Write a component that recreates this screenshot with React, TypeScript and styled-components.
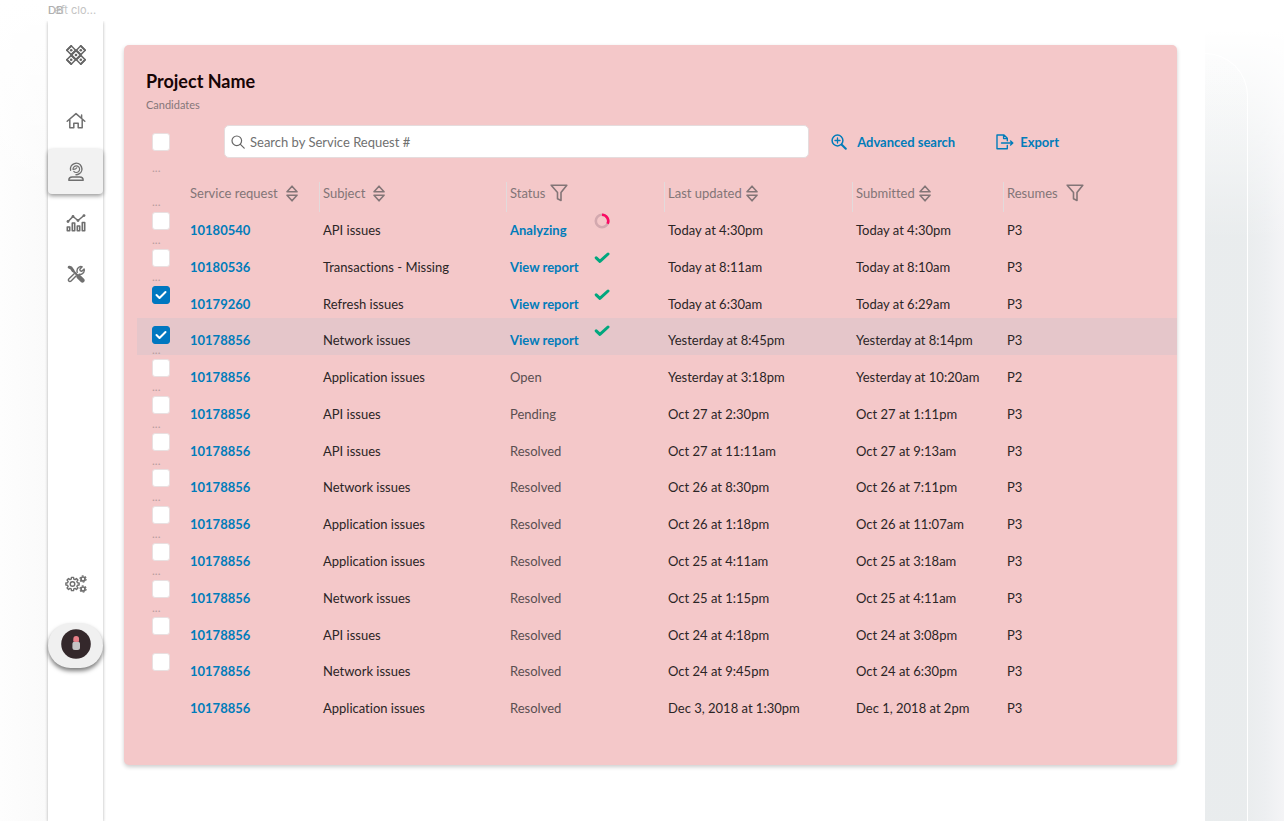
import React, { useState } from "react";
import styled, { createGlobalStyle, css } from "styled-components";

const GlobalStyle = createGlobalStyle`
  *, *::before, *::after { box-sizing: border-box; }
  body {
    margin: 0;
    background: #fff;
    color: #2b2526;
    font-family: Lato, "Liberation Sans", sans-serif;
    font-size: 13px;
    line-height: 20px;
    font-variant-ligatures: none;
  }
`;

const Shell = styled.div`
  display: flex;
  min-height: 100vh;
`;

const Gutter = styled.div`
  flex: 0 0 48px;
  background: linear-gradient(to bottom, #fff, rgba(255, 255, 255, 0) 200px),
    linear-gradient(to right, #fdfdfd, #fafafa);
`;

const Rail = styled.div`
  flex: 0 0 55px;
  display: flex;
  flex-direction: column;
`;

const FrameLabels = styled.div`
  display: grid;
  height: 21px;
  font-family: Inter, "Liberation Sans", sans-serif;
  font-size: 11px;
  white-space: nowrap;
`;

const FrameLabel = styled.span<{ $tone: string }>`
  grid-area: 1 / 1;
  color: ${(p) => p.$tone};
`;

const Nav = styled.nav`
  flex: 1;
  display: flex;
  flex-direction: column;
  gap: 6px;
  padding: 12px 0 153px;
  background: #fff;
  box-shadow: 0 1px 3px rgba(0, 0, 0, 0.3);
  clip-path: inset(0 -6px);
`;

const Brand = styled.div`
  display: grid;
  place-items: center;
  height: 44px;
  margin-bottom: 15px;
  color: #666;
`;

const raised = css`
  background: #f2f2f2;
  box-shadow: 0 2px 4px rgba(0, 0, 0, 0.4);
`;

const NavButton = styled.button<{ $active?: boolean; $bottom?: boolean }>`
  display: grid;
  place-items: center;
  height: 45px;
  padding: 0;
  border: 0;
  border-radius: 4px;
  background: none;
  color: #6f6f6f;
  cursor: pointer;
  ${(p) => p.$active && raised}
  ${(p) => p.$bottom && "margin-top: auto;"}
`;

const AvatarButton = styled.button`
  display: grid;
  justify-items: center;
  align-items: start;
  height: 45px;
  margin-top: 11px;
  padding: 6px 0 0;
  border: 0;
  border-radius: 23px;
  cursor: pointer;
  background: #f0f0f0;
  box-shadow: 0 3px 4px rgba(0, 0, 0, 0.5);
`;

const Main = styled.main`
  flex: 1;
  min-width: 0;
  padding: 45px 28px 56px 21px;
`;

const Card = styled.section`
  padding: 24px 0 42px;
  border-radius: 5px;
  background: #f4c8c9;
  box-shadow: 0 2px 4px rgba(0, 0, 0, 0.2);
`;

const Heading = styled.header`
  padding: 0 22px;
`;

const Title = styled.h1`
  margin: 0;
  font-size: 18px;
  line-height: 24px;
  font-weight: 700;
  color: #170405;
`;

const Subtitle = styled.p`
  margin: 4px 0 0;
  font-size: 11px;
  line-height: 16px;
  color: #857779;
`;

const Toolbar = styled.div`
  display: flex;
  align-items: center;
  padding: 12px 118px 0 28px;
`;

const SearchBox = styled.label`
  flex: 1;
  display: flex;
  align-items: center;
  gap: 5px;
  height: 33px;
  margin: 0 22px 0 54px;
  padding: 0 6px;
  border: 1px solid #e5dcdd;
  border-radius: 5px;
  background: #fff;
  color: #666;
`;

const SearchInput = styled.input`
  flex: 1;
  min-width: 0;
  padding: 0;
  border: 0;
  outline: 0;
  background: none;
  font: inherit;
  color: #333;
  &::placeholder {
    color: #707070;
    opacity: 1;
  }
`;

const ActionButton = styled.button`
  display: flex;
  align-items: center;
  padding: 0;
  border: 0;
  background: none;
  font: inherit;
  font-weight: 700;
  color: #007cba;
  cursor: pointer;
`;

const Actions = styled.div`
  display: flex;
  gap: 41px;
`;

const ActionText = styled.span<{ $gap: number }>`
  margin-left: ${(p) => p.$gap}px;
`;

const Table = styled.table`
  display: block;
  margin-left: 13px;
`;

const row = css`
  display: grid;
  grid-template-columns: 49px 133fr 187fr 158fr 188fr 151fr 174fr;
`;

const Head = styled.thead`
  display: block;
`;

const HeadRow = styled.tr`
  ${row}
  height: 50px;
`;

const Body = styled.tbody`
  display: grid;
  grid-template-rows: repeat(14, minmax(0, 1fr));
  height: 515px;
`;

const BodyRow = styled.tr<{ $highlight: boolean }>`
  ${row}
  background: ${(p) => (p.$highlight ? "#e5c6ca" : "none")};
`;

const HeadCell = styled.th<{ $divider?: boolean }>`
  position: relative;
  padding: 24px 0 0 4px;
  text-align: left;
  font-weight: 400;
  color: #837577;
  ${(p) =>
    p.$divider &&
    css`
      &::before {
        content: "";
        position: absolute;
        left: 0;
        top: 24px;
        width: 1px;
        height: 30px;
        background: #e2dadb;
      }
    `}
`;

const SortButton = styled.button<{ $gap: number }>`
  display: flex;
  align-items: center;
  gap: ${(p) => p.$gap}px;
  height: 22px;
  padding: 0;
  border: 0;
  background: none;
  font: inherit;
  color: inherit;
  white-space: nowrap;
  cursor: pointer;
`;

const Cell = styled.td`
  padding: 12px 0 0 4px;
  white-space: nowrap;
`;

const StatusCell = styled.td`
  display: flex;
  align-items: flex-start;
  padding: 5px 0 0 4px;
  color: #5a4f51;
`;

const StatusText = styled.div`
  width: 84px;
  padding-top: 7px;
`;

const Link = styled.a`
  font-weight: 700;
  color: #007cba;
  text-decoration: none;
`;

const CheckCell = styled.td<{ $top: number }>`
  padding: ${(p) => p.$top}px 0 0 15px;
`;

const Dots = styled.div<{ $gap: number }>`
  margin-top: ${(p) => p.$gap}px;
  font-size: 12px;
  line-height: 12px;
  height: 12px;
  color: #b79c9e;
`;

const HeadDots = styled.th`
  padding: 0 0 0 15px;
  display: flex;
  flex-direction: column;
  justify-content: space-between;
  text-align: left;
  font-weight: 400;
`;

const CheckLabel = styled.label`
  display: grid;
  width: 18px;
  height: 18px;
  color: #fff;
  cursor: pointer;
  svg {
    grid-area: 1 / 1;
    place-self: center;
    pointer-events: none;
  }
`;

const CheckInput = styled.input`
  grid-area: 1 / 1;
  appearance: none;
  width: 18px;
  height: 18px;
  margin: 0;
  border: 1px solid #e9dfe0;
  border-radius: 3px;
  background: #fff;
  cursor: pointer;
  &:checked {
    border-color: #0077c0;
    background: #0077c0;
  }
`;

const Backdrop = styled.aside`
  flex: 0 0 79px;
  display: flex;
  padding-top: 53px;
  background: linear-gradient(to bottom, #fff 30px, rgba(255, 255, 255, 0) 240px),
    linear-gradient(to right, #eaedee 43px, #edeff1 60px, #f4f4f6);
`;

const BackdropPanel = styled.div`
  width: 43px;
  border: solid #fff;
  border-width: 1px 1px 0 0;
  border-radius: 0 43px 0 0;
  background: linear-gradient(to bottom, rgba(225, 229, 232, 0), rgba(225, 229, 232, 0.1) 180px);
`;

const stroke = {
  fill: "none",
  stroke: "currentColor",
  strokeLinecap: "round" as const,
  strokeLinejoin: "round" as const,
};

const BrandIcon = () => (
  <svg width="20" height="20" viewBox="0 0 20 20" {...stroke} strokeWidth="1.5" strokeLinejoin="miter">
    {[[5.2, 5.2], [14.8, 5.2], [10, 10], [5.2, 14.8], [14.8, 14.8]].map(([x, y]) => (
      <g key={`${x}-${y}`}>
        <path d={`M${x} ${y - 4.4}l4.400 4.400-4.400 4.400-4.400-4.400z`} />
        <circle cx={x} cy={y} r="1.300" fill="currentColor" stroke="none" />
      </g>
    ))}
    <path d="M1 5.200L5.200 1M14.800 1L19 5.200M1 14.800L5.200 19M14.800 19l4.200-4.200" strokeWidth="1.800" />
    <path d="M5.200 9.600l4.800-4.800M14.800 9.600L10 4.800M5.200 10.400l4.800 4.800M14.800 10.400L10 15.200" strokeWidth="1.200" />
  </svg>
);

const HomeIcon = () => (
  <svg width="20" height="18" viewBox="0 0 20 18" {...stroke} strokeWidth="1.5">
    <path d="M1.2 9.2L10 1.6l8.8 7.6M15.600 6V3M3.800 8v7.800h4v-4.600h4.400v4.600h4V8" />
  </svg>
);

const AgentIcon = () => (
  <svg width="18" height="20" viewBox="0 0 18 20" {...stroke} strokeWidth="1.4">
    <path d="M3.600 8.200A5.700 5.700 0 1 1 12 11.900c-.9.600-1.800.8-3 .8" />
    <path d="M6 7.200a3.300 3.300 0 1 1 3.200 3.300c-1 0-1.800-.3-2.400-1.100M6.200 7.400c1.800 0 3-.5 3.600-1.600" strokeWidth="1.200" />
    <path d="M1.800 18.200c0-2 1.400-3.200 3.400-3.200h7.600c2 0 3.400 1.200 3.400 3.200z" />
  </svg>
);

const ChartIcon = () => (
  <svg width="20" height="18" viewBox="0 0 20 18" {...stroke} strokeWidth="1.6">
    <path d="M1.300 13h2.400v3.800H1.300zM6.300 9h2.400v7.800H6.300zM11.300 12h2.400v4.800h-2.400zM16.300 8.500h2.400v8.300h-2.400z" />
    <path d="M2 7.500l5-5 5 4 6-5" />
    <g fill="currentColor" stroke="none">
      <circle cx="2" cy="7.500" r="1.400" />
      <circle cx="7" cy="2.500" r="1.400" />
      <circle cx="12" cy="6.500" r="1.400" />
      <circle cx="18" cy="1.600" r="1.400" />
    </g>
  </svg>
);

const ToolsIcon = () => (
  <svg width="18" height="18" viewBox="0 0 18 18" {...stroke} strokeWidth="1.4">
    <path d="M2.200 2.200l2 .8 1.800 2.600" strokeWidth="3" />
    <path d="M6 5.800l4.400 4.400" strokeWidth="2" />
    <path d="M11.600 11.600l3.800 3.800" strokeWidth="4.400" />
    <path d="M10.200 7.400c-.5-2 .2-4.200 1.800-5.200 1-.7 2.200-.8 3.200-.4L12.800 4.200l.4 1.600 1.600.4 2.300-2.300c.5 2-.2 4-2 5-.9.500-1.900.600-2.900.4" />
    <path d="M7.200 8.800L2 13.800c-.8.8-.8 1.600-.2 2.200.6.700 1.600.7 2.300 0L9 11" />
  </svg>
);

const Gear = ({ x, y, r, teeth, w }: { x: number; y: number; r: number; teeth: number; w: number }) => {
  const points: string[] = [];
  const step = (Math.PI * 2) / teeth;
  for (let i = 0; i < teeth; i++) {
    [[-0.32, 0.76], [-0.2, 1], [0.2, 1], [0.32, 0.76]].forEach(([turn, scale]) => {
      const a = (i + turn) * step;
      points.push(`${(x + Math.cos(a) * r * scale).toFixed(2)} ${(y + Math.sin(a) * r * scale).toFixed(2)}`);
    });
  }
  return (
    <g strokeWidth={w}>
      <path d={`M${points.join("L")}z`} />
      <circle cx={x} cy={y} r={r * 0.34} />
    </g>
  );
};

const SmallGear = ({ x, y }: { x: number; y: number }) => (
  <g strokeLinecap="butt">
    <circle cx={x} cy={y} r="2" strokeWidth="1.700" />
    <circle cx={x} cy={y} r="3.100" strokeWidth="1.200" strokeDasharray="1.800 1.446" />
  </g>
);

const GearsIcon = () => (
  <svg width="22" height="18" viewBox="0 0 22 18" {...stroke}>
    <Gear x={7.5} y={9} r={6.7} teeth={8} w={1.4} />
    <SmallGear x={18} y={4} />
    <SmallGear x={18} y={14} />
  </svg>
);

const AvatarIcon = () => (
  <svg width="30" height="30" viewBox="0 0 30 30">
    <circle cx="15" cy="15" r="14.800" fill="#34282b" />
    <rect x="11.400" y="12.600" width="7.600" height="8.400" rx="2.500" fill="#c4c4c4" />
    <circle cx="15.200" cy="10" r="2.900" fill="#e87f88" />
    <rect x="12.400" y="10.600" width="5.600" height="2" fill="#e87f88" />
  </svg>
);

const SearchIcon = () => (
  <svg width="14" height="14" viewBox="0 0 14 14" {...stroke} strokeWidth="1.200">
    <circle cx="5.800" cy="5.800" r="4.800" />
    <path d="M9.400 9.400l3.800 3.800" />
  </svg>
);

const ZoomInIcon = () => (
  <svg width="16" height="16" viewBox="0 0 16 16" {...stroke} strokeWidth="1.500">
    <circle cx="6.500" cy="6.500" r="5.400" />
    <path d="M4 6.500h5M6.500 4v5" strokeWidth="1.300" />
    <path d="M10.800 10.800l4 4" strokeWidth="2" />
  </svg>
);

const ExportIcon = () => (
  <svg width="18" height="16" viewBox="0 0 18 16" {...stroke} strokeWidth="1.400">
    <path d="M11.300 11.500v3.300H1V1h7l3.300 3.300v2.500M7.600 1v3.600h3.700M5.500 9h11M14.600 7l2.200 2-2.200 2" />
  </svg>
);

const SortIcon = () => (
  <svg width="12" height="17" viewBox="0 0 12 17" {...stroke} strokeWidth="1.600">
    <path d="M1 6.800l5-5.600 5 5.600zM1 10.200l5 5.600 5-5.600z" />
  </svg>
);

const FilterIcon = () => (
  <svg width="18" height="18" viewBox="0 0 18 18" {...stroke} strokeWidth="1.600">
    <path d="M1.200 1.200h15.600L11 8.500v8l-3.500-1.800V8.500z" />
  </svg>
);

const CheckIcon = () => (
  <svg width="12" height="10" viewBox="0 0 12 10" {...stroke} strokeWidth="2">
    <path d="M1.500 5l3 3 6-6" />
  </svg>
);

const DoneIcon = () => (
  <svg width="16" height="16" viewBox="0 0 16 16" {...stroke} stroke="#00a77e" strokeWidth="3">
    <path d="M2.200 7.800l3.700 3.600L14 4" />
  </svg>
);

const Spinner = () => (
  <svg width="16" height="16" viewBox="0 0 16 16" fill="none" strokeWidth="2.600">
    <circle cx="8" cy="8" r="6.200" stroke="#d3a9af" />
    <path d="M8 1.800A6.200 6.200 0 0 1 13.600 10.700" stroke="#fb0a63" />
  </svg>
);

type Column = { name: string; gap: number; filter?: boolean };

const columns: Column[] = [
  { name: "Service request", gap: 8 },
  { name: "Subject", gap: 8 },
  { name: "Status", gap: 5, filter: true },
  { name: "Last updated", gap: 4 },
  { name: "Submitted", gap: 4 },
  { name: "Resumes", gap: 8, filter: true },
];

const requests = [
  ["10180540", "API issues", "Analyzing", "Today at 4:30pm", "Today at 4:30pm", "P3"],
  ["10180536", "Transactions - Missing", "View report", "Today at 8:11am", "Today at 8:10am", "P3"],
  ["10179260", "Refresh issues", "View report", "Today at 6:30am", "Today at 6:29am", "P3"],
  ["10178856", "Network issues", "View report", "Yesterday at 8:45pm", "Yesterday at 8:14pm", "P3"],
  ["10178856", "Application issues", "Open", "Yesterday at 3:18pm", "Yesterday at 10:20am", "P2"],
  ["10178856", "API issues", "Pending", "Oct 27 at 2:30pm", "Oct 27 at 1:11pm", "P3"],
  ["10178856", "API issues", "Resolved", "Oct 27 at 11:11am", "Oct 27 at 9:13am", "P3"],
  ["10178856", "Network issues", "Resolved", "Oct 26 at 8:30pm", "Oct 26 at 7:11pm", "P3"],
  ["10178856", "Application issues", "Resolved", "Oct 26 at 1:18pm", "Oct 26 at 11:07am", "P3"],
  ["10178856", "Application issues", "Resolved", "Oct 25 at 4:11am", "Oct 25 at 3:18am", "P3"],
  ["10178856", "Network issues", "Resolved", "Oct 25 at 1:15pm", "Oct 25 at 4:11am", "P3"],
  ["10178856", "API issues", "Resolved", "Oct 24 at 4:18pm", "Oct 24 at 3:08pm", "P3"],
  ["10178856", "Network issues", "Resolved", "Oct 24 at 9:45pm", "Oct 24 at 6:30pm", "P3"],
  ["10178856", "Application issues", "Resolved", "Dec 3, 2018 at 1:30pm", "Dec 1, 2018 at 2pm", "P3"],
];

const ACTIVE_ROW = 3;
const LAST_BOX = 12;

const dotsGap = (index: number) => {
  if (index === ACTIVE_ROW) return 0;
  return index === ACTIVE_ROW - 1 ? 8 : 4;
};

const Checkbox = ({ label, checked, onChange }: { label: string; checked: boolean; onChange: () => void }) => (
  <CheckLabel>
    <CheckInput type="checkbox" aria-label={label} checked={checked} onChange={onChange} />
    {checked && <CheckIcon />}
  </CheckLabel>
);

const Status = ({ value }: { value: string }) => {
  const linked = value === "Analyzing" || value === "View report";
  return (
    <StatusCell>
      <StatusText>{linked ? <Link href="#report">{value}</Link> : value}</StatusText>
      {value === "Analyzing" && <Spinner />}
      {value === "View report" && <DoneIcon />}
    </StatusCell>
  );
};

export default function App() {
  const [all, setAll] = useState(false);
  const [selected, setSelected] = useState<number[]>([2, 3]);
  const toggle = (i: number) =>
    setSelected((s) => (s.includes(i) ? s.filter((n) => n !== i) : [...s, i]));

  return (
    <Shell>
      <GlobalStyle />
      <Gutter />
      <Rail>
        <FrameLabels>
          <FrameLabel $tone="#c4c4c4">Left clo...</FrameLabel>
          <FrameLabel $tone="#b0b0b0">DB</FrameLabel>
        </FrameLabels>
        <Nav>
          <Brand><BrandIcon /></Brand>
          <NavButton aria-label="Home"><HomeIcon /></NavButton>
          <NavButton aria-label="Candidates" $active><AgentIcon /></NavButton>
          <NavButton aria-label="Analytics"><ChartIcon /></NavButton>
          <NavButton aria-label="Tools"><ToolsIcon /></NavButton>
          <NavButton aria-label="Settings" $bottom><GearsIcon /></NavButton>
          <AvatarButton aria-label="Account"><AvatarIcon /></AvatarButton>
        </Nav>
      </Rail>
      <Main>
        <Card>
          <Heading>
            <Title>Project Name</Title>
            <Subtitle>Candidates</Subtitle>
          </Heading>
          <Toolbar>
            <Checkbox label="Select all" checked={all} onChange={() => setAll(!all)} />
            <SearchBox>
              <SearchIcon />
              <SearchInput type="text" aria-label="Search" placeholder="Search by Service Request #" />
            </SearchBox>
            <Actions>
              <ActionButton>
                <ZoomInIcon />
                <ActionText $gap={10}>Advanced search</ActionText>
              </ActionButton>
              <ActionButton>
                <ExportIcon />
                <ActionText $gap={6}>Export</ActionText>
              </ActionButton>
            </Actions>
          </Toolbar>
          <Table>
            <Head>
              <HeadRow>
                <HeadDots>
                  <Dots $gap={4}>...</Dots>
                  <Dots $gap={0}>...</Dots>
                </HeadDots>
                {columns.map((c, i) => (
                  <HeadCell key={c.name} scope="col" $divider={i > 0}>
                    <SortButton $gap={c.gap}>
                      {c.name}
                      {c.filter ? <FilterIcon /> : <SortIcon />}
                    </SortButton>
                  </HeadCell>
                ))}
              </HeadRow>
            </Head>
            <Body>
              {requests.map(([id, subject, status, updated, submitted, resumes], i) => (
                <BodyRow key={i} $highlight={i === ACTIVE_ROW}>
                  <CheckCell $top={i === ACTIVE_ROW ? 8 : 4}>
                    {i <= LAST_BOX && (
                      <Checkbox label={`Select ${id}`} checked={selected.includes(i)} onChange={() => toggle(i)} />
                    )}
                    {i < LAST_BOX - 1 && <Dots $gap={dotsGap(i)}>...</Dots>}
                  </CheckCell>
                  <Cell><Link href="#request">{id}</Link></Cell>
                  <Cell>{subject}</Cell>
                  <Status value={status} />
                  <Cell>{updated}</Cell>
                  <Cell>{submitted}</Cell>
                  <Cell>{resumes}</Cell>
                </BodyRow>
              ))}
            </Body>
          </Table>
        </Card>
      </Main>
      <Backdrop>
        <BackdropPanel />
      </Backdrop>
    </Shell>
  );
}
